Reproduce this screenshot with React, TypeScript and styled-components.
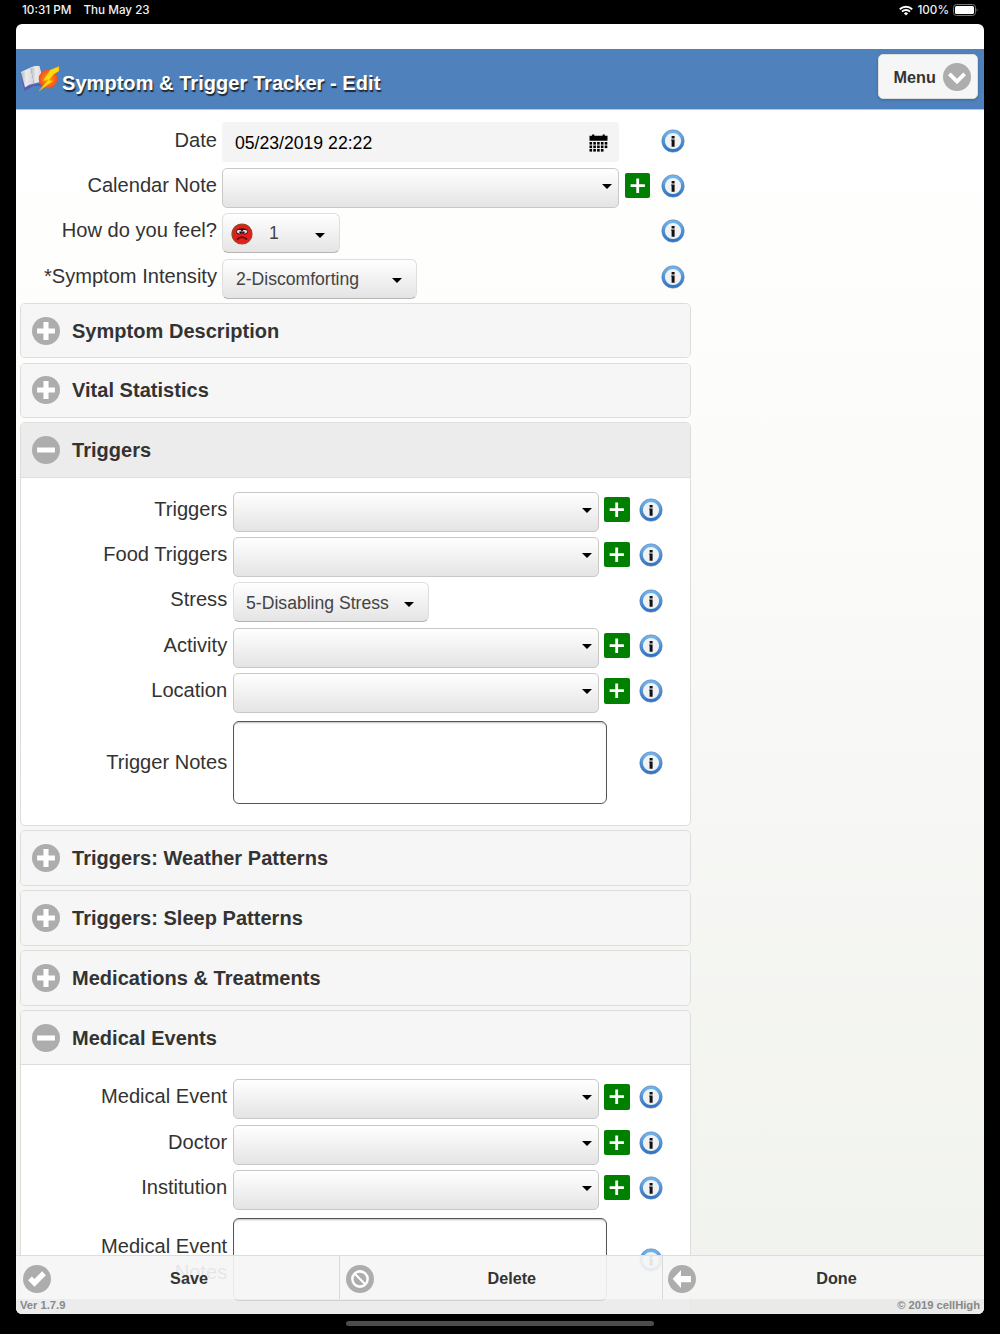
import type { FunctionComponent, ReactNode } from "react";
import styled, { createGlobalStyle } from "styled-components";

const GlobalStyle = createGlobalStyle`
  * {
    box-sizing: border-box;
  }
  body {
    margin: 0;
    background: #000;
    color: #333;
    font-family: "Liberation Sans", Arial, sans-serif;
  }
`;

const Device = styled.div`
  position: relative;
  display: flex;
  flex-direction: column;
  align-items: center;
  width: 1000px;
  height: 1334px;
  overflow: hidden;
  background: #000;
`;

const StatusBar = styled.div`
  display: flex;
  align-items: center;
  width: 100%;
  height: 24px;
  padding: 0 22px 4px 22px;
  color: #f2f2f2;
  font: 500 11.7px/20px Inter, sans-serif;
`;

const StatusDate = styled.span`
  flex: 1;
  margin-left: 12px;
`;

const Icon = styled.svg`
  display: block;
  flex: none;
`;

const StatusPercent = styled.span`
  margin: 0 4px;
`;

const Screen = styled.div`
  position: relative;
  width: 968px;
  height: 1290px;
  padding-top: 25px;
  overflow: hidden;
  border-radius: 6px;
  background: #fff;
`;

const Header = styled.header`
  display: flex;
  align-items: center;
  height: 60.5px;
  padding: 0 6.5px 0 4px;
  border-bottom: 1px solid #b9c6d6;
  background: #4f81bd;
`;

const Title = styled.h1`
  flex: 1;
  margin: 8px 0 0 1px;
  color: #fff;
  font-size: 20px;
  letter-spacing: 0.05px;
  line-height: 26px;
  text-shadow: 1px 2px 1px #1c2733;
`;

const MenuButton = styled.button`
  display: flex;
  align-items: center;
  justify-content: space-between;
  width: 100px;
  height: 45px;
  margin-bottom: 4px;
  padding: 1px 6px 0 15px;
  border: 1px solid #ddd;
  border-radius: 5px;
  background: #f6f6f6;
  box-shadow: 0 1px 3px rgba(0, 0, 0, 0.2);
  color: #333;
  font: bold 16.2px "Liberation Sans", sans-serif;
`;

const Content = styled.main`
  height: 1204.5px;
  padding: 10.3px 4px 0;
  overflow: hidden;
  background: linear-gradient(#fff, #fefefd 12%, #f0f2ed);
`;

const Form = styled.div`
  width: 671px;
`;

const Row = styled.div<{ $nested?: boolean; $tall?: boolean }>`
  display: grid;
  grid-template-columns: ${({ $nested }) =>
    $nested ? "206.2px 366.5px 28.7px 24px" : "197px 397px 30.7px 24px"};
  column-gap: 5.4px;
  align-items: center;
  height: ${({ $tall }) => ($tall ? 93 : 45.35)}px;
`;

const Label = styled.label<{ $tall?: boolean }>`
  padding: ${({ $tall }) => ($tall ? "1px 0 0" : "0 0 4.4px")};
  font-size: 20.1px;
  line-height: 25.5px;
  text-align: right;
  white-space: nowrap;
`;

const DateInput = styled.div`
  display: flex;
  align-items: center;
  justify-content: space-between;
  height: 40px;
  padding: 1.5px 11px 0 12.5px;
  border-radius: 4px;
  background: #f4f4f4;
  color: #000;
  font-size: 17.65px;
`;

const Select = styled.div<{ $width?: number }>`
  display: flex;
  align-items: center;
  justify-content: space-between;
  width: ${({ $width }) => ($width ? `${$width}px` : "100%")};
  height: 40px;
  padding: ${({ $width }) => ($width ? "1.5px 14px 0 12.5px" : "0 6px 0 12.5px")};
  border: 1px solid ${({ $width }) => ($width ? "#dedede" : "#c8c8c8")};
  border-bottom-color: ${({ $width }) => ($width ? "#b5b5b5" : "#c8c8c8")};
  border-radius: ${({ $width }) => ($width ? 6 : 5)}px;
  background: linear-gradient(#fff, #e4e4e4);
  color: #444;
  font-size: 17.6px;
`;

const Caret = styled.i<{ $low?: boolean }>`
  margin: ${({ $low }) => ($low ? "3px 0 0 auto" : "0 0 3px auto")};
  border: 5px solid transparent;
  border-top-color: #000;
  border-bottom-width: 0;
`;

const Mood = styled.span`
  display: flex;
  align-items: center;
  gap: 16px;
  margin-left: -5px;
`;

const TextArea = styled.div`
  width: 374.5px;
  height: 83px;
  border: 1px solid #555;
  border-radius: 6px;
  background: #fff;
  box-shadow: inset 0 2px 2px -1px rgba(0, 0, 0, 0.25);
`;

const AddButton = styled.span`
  width: 25.5px;
  height: 25.5px;
  margin-bottom: 4.6px;
  border-radius: 2px;
  background: #008000;
`;

const InfoButton = styled.span<{ $tall?: boolean }>`
  grid-column: 4;
  height: 24px;
  margin-bottom: ${({ $tall }) => ($tall ? -1 : 3.5)}px;
`;

const Panel = styled.section`
  margin-bottom: 4.33px;
  overflow: hidden;
  border: 1px solid #ddd;
  border-radius: 5px;
  background: #fff;
`;

const PanelHeader = styled.h2<{ $active?: boolean }>`
  display: flex;
  align-items: center;
  gap: 12px;
  height: 53.5px;
  margin: 0;
  padding: 0 0 0 11px;
  background: ${({ $active }) => ($active ? "#ececec" : "#f6f6f6")};
  font-size: 20px;
  letter-spacing: 0.03px;
  line-height: 24px;
`;

const PanelBody = styled.div`
  padding: 11.1px 0 16.4px;
  border-top: 1px solid #ddd;
`;

const Panels = styled.div`
  padding-top: 1.6px;
`;

const Footer = styled.footer`
  position: absolute;
  right: 0;
  bottom: 0;
  left: 0;
  height: 59px;
  border-top: 1px solid #ddd;
  background: rgba(232, 232, 232, 0.84);
`;

const Actions = styled.nav`
  display: grid;
  grid-template-columns: 324px 322.5px 1fr;
  height: 43px;
  background: rgba(255, 255, 255, 0.52);
`;

const Action = styled.div`
  display: flex;
  align-items: center;
  padding: 2px 11.5px 0 6.5px;
  border-right: 1px solid #d8d8d8;
  color: #333;
  font-size: 16.2px;
  font-weight: bold;

  &:not(:first-child) {
    padding-left: 5.5px;
  }

  &:last-child {
    padding-right: 7px;
    border-right: 0;
  }
`;

const ActionText = styled.span`
  flex: 1;
  text-align: center;
`;

const Credits = styled.div`
  display: flex;
  justify-content: space-between;
  padding: 0 4px;
  color: #888;
  font-size: 11.2px;
  font-weight: bold;
  line-height: 13px;
`;

const HomeBar = styled.div`
  width: 308px;
  height: 5px;
  margin-top: 7px;
  border-radius: 3px;
  background: #4c4c4c;
`;

const discPaths = {
  plus: "M5 0h4v5h5v4H9v5H5V9H0V5h5z",
  minus: "M0 5h14v4H0z",
  carat: "M11.95 3.4 7 8.35 2.05 3.4-.07 5.53 7 12.6l7.07-7.07z",
  check: "m14 4-3-3-6 6-2-2-3 3 5 5z",
  forbidden:
    "M7 0a7 7 0 1 0 0 14A7 7 0 0 0 7 0m0 2c2.8 0 5 2.2 5 5 0 1.1-.3 2.1-.9 2.900l-7-7C4.9 2.3 5.9 2 7 2m0 10c-2.800 0-5-2.200-5-5 0-1.100.3-2.100.9-2.900l7 7c-.8.6-1.800.9-2.900.9",
  arrow: "M6.2 0v4.7H14v4.8H6.2V14L-.3 7z",
};

interface DiscIconProps {
  name: keyof typeof discPaths;
}

const DiscIcon: FunctionComponent<DiscIconProps> = ({ name }) => (
  <Icon width="28" height="28" viewBox="-4 -4 22 22">
    <circle cx="7" cy="7" r="11" fill="#adadad" />
    <path d={discPaths[name]} fill="#fff" />
  </Icon>
);

const TrackerLogo = () => (
  <Icon width="41" height="28" viewBox="0 0 41 28">
    <defs>
      <radialGradient id="burst">
        <stop offset="0" stopColor="#ff9c18" />
        <stop offset="1" stopColor="#f4501c" />
      </radialGradient>
      <linearGradient id="page">
        <stop offset="0" stopColor="#b4b4ba" />
        <stop offset=".4" stopColor="#ececee" />
        <stop offset="1" stopColor="#d2d2d6" />
      </linearGradient>
    </defs>
    <path d="m.5 8 4 18 9-5h10l-.5-3-18 3z" fill="#5c58b4" />
    <path d="M1 7.5 10.5 3 14 18.5q-5 .5-9 4z" fill="url(#page)" />
    <path d="M10.5 3Q15 .5 19.5 1.5L24 17q-6-.5-10 1.5z" fill="url(#page)" />
    <path
      d="M1 7.5 10.5 3Q15 .5 19.5 1.5"
      fill="none"
      stroke="#f6f6f8"
      strokeWidth=".8"
    />
    <circle cx="28" cy="14" r="9.3" fill="url(#burst)" />
    <path
      d="M39 1.5 30 5l-7 11 5-1-9 11 14-10-4-1 5-6 5-3z"
      fill="#ffdc10"
      stroke="#f0a000"
      strokeWidth=".6"
    />
  </Icon>
);

const SadFace = () => (
  <Icon width="22" height="22" viewBox="0 0 22 22">
    <circle cx="11" cy="11" r="10" fill="#e81c1c" stroke="#8a4a20" strokeWidth="1.2" />
    <ellipse cx="8.2" cy="8.6" rx="2.8" ry="2.4" fill="#ddd" stroke="#301010" />
    <ellipse cx="13.8" cy="8.6" rx="2.8" ry="2.4" fill="#ddd" stroke="#301010" />
    <path d="M6 6.9q5-3.4 10 0z" fill="#301010" />
    <path d="M8.4 9.2H10M12 9.2h1.6" stroke="#111" strokeWidth="1.6" />
    <path d="M6 16.5q5-4.6 10 0" fill="none" stroke="#501010" strokeWidth="1.7" />
  </Icon>
);

const CalendarIcon = () => (
  <Icon width="19" height="19" viewBox="0 0 19 19">
    <path d="M.5 1.8h2.6V.4h2.2v1.4h8.3V.4h2.2v1.4h2.7v5H.5z" />
    {[8, 11.5, 15].map((y) =>
      [0.5, 4.3, 8.1, 11.9, 15.7].map((x) =>
        y === 15 && x === 15.7 ? null : (
          <rect key={`${x}-${y}`} x={x} y={y} width="2.6" height="2.6" />
        )
      )
    )}
  </Icon>
);

const InfoIcon = () => (
  <Icon width="24" height="24" viewBox="0 0 24 24">
    <defs>
      <linearGradient id="ring" x2="0" y2="1">
        <stop offset="0" stopColor="#6db5ee" />
        <stop offset="1" stopColor="#2f75c4" />
      </linearGradient>
    </defs>
    <circle cx="12" cy="12" r="9.6" fill="#f0f1f3" stroke="url(#ring)" strokeWidth="3" />
    <circle cx="12" cy="12" r="11.2" fill="none" stroke="#4a6fa5" strokeWidth=".6" />
    <path d="M10.6 7h3v2.4h-3zM10.2 10.5h3.4v7.2h-3v-6h-.4z" fill="#111" />
  </Icon>
);

const AddIcon = () => (
  <Icon width="25.5" height="25.5" viewBox="0 0 25.5 25.5">
    <path d="M12.7 5.6v14.3M5.6 12.7h14.3" stroke="#fff" strokeWidth="2.8" />
  </Icon>
);

interface FieldProps {
  label: string;
  nested?: boolean;
  tall?: boolean;
  add?: boolean;
  children?: ReactNode;
}

const Field: FunctionComponent<FieldProps> = ({
  label,
  nested,
  tall,
  add,
  children,
}) => (
  <Row $nested={nested} $tall={tall}>
    <Label $tall={tall}>
      {label.split("\n").map((line) => (
        <div key={line}>{line}</div>
      ))}
    </Label>
    {children ?? (
      <Select>
        <Caret />
      </Select>
    )}
    {add && (
      <AddButton>
        <AddIcon />
      </AddButton>
    )}
    <InfoButton $tall={tall}>
      <InfoIcon />
    </InfoButton>
  </Row>
);

interface CollapsibleProps {
  title: string;
  active?: boolean;
  children?: ReactNode;
}

const Collapsible: FunctionComponent<CollapsibleProps> = ({
  title,
  active,
  children,
}) => (
  <Panel>
    <PanelHeader $active={active}>
      <DiscIcon name={children ? "minus" : "plus"} />
      {title}
    </PanelHeader>
    {children && <PanelBody>{children}</PanelBody>}
  </Panel>
);

const App: FunctionComponent = () => {
  return (
    <Device>
      <GlobalStyle />
      <StatusBar>
        <span>10:31 PM</span>
        <StatusDate>Thu May 23</StatusDate>
        <Icon width="14" height="11" viewBox="0 0 14 11">
          <g fill="none" stroke="#fff" strokeWidth="1.9">
            <path d="M.8 4.2a9 9 0 0 1 12.4 0M3 6.6a5.8 5.8 0 0 1 8 0" />
          </g>
          <path d="M4.9 8.4a3 3 0 0 1 4.2 0L7 10.6z" fill="#fff" />
        </Icon>
        <StatusPercent>100%</StatusPercent>
        <Icon width="25" height="12" viewBox="0 0 25 12">
          <rect x=".5" y=".5" width="22" height="11" rx="3" fill="none" stroke="#777" />
          <rect x="2" y="2" width="19" height="8" rx="1.6" fill="#fff" />
          <path d="M23.7 4.3q1.5 1.7 0 3.4z" fill="#888" />
        </Icon>
      </StatusBar>
      <Screen>
        <Header>
          <TrackerLogo />
          <Title>Symptom &amp; Trigger Tracker - Edit</Title>
          <MenuButton>
            Menu
            <DiscIcon name="carat" />
          </MenuButton>
        </Header>
        <Content>
          <Form>
            <Field label="Date">
              <DateInput>
                05/23/2019 22:22
                <CalendarIcon />
              </DateInput>
            </Field>
            <Field label="Calendar Note" add />
            <Field label="How do you feel?">
              <Select $width={118}>
                <Mood>
                  <SadFace />1
                </Mood>
                <Caret $low />
              </Select>
            </Field>
            <Field label="*Symptom Intensity">
              <Select $width={195}>
                2-Discomforting
                <Caret $low />
              </Select>
            </Field>
            <Panels>
              <Collapsible title="Symptom Description" />
              <Collapsible title="Vital Statistics" />
              <Collapsible title="Triggers" active>
                <Field nested label="Triggers" add />
                <Field nested label="Food Triggers" add />
                <Field nested label="Stress">
                  <Select $width={196}>
                    5-Disabling Stress
                    <Caret $low />
                  </Select>
                </Field>
                <Field nested label="Activity" add />
                <Field nested label="Location" add />
                <Field nested tall label="Trigger Notes">
                  <TextArea />
                </Field>
              </Collapsible>
              <Collapsible title="Triggers: Weather Patterns" />
              <Collapsible title="Triggers: Sleep Patterns" />
              <Collapsible title="Medications & Treatments" />
              <Collapsible title="Medical Events">
                <Field nested label="Medical Event" add />
                <Field nested label="Doctor" add />
                <Field nested label="Institution" add />
                <Field nested tall label={"Medical Event\nNotes"}>
                  <TextArea />
                </Field>
              </Collapsible>
            </Panels>
          </Form>
        </Content>
        <Footer>
          <Actions>
            <Action>
              <DiscIcon name="check" />
              <ActionText>Save</ActionText>
            </Action>
            <Action>
              <DiscIcon name="forbidden" />
              <ActionText>Delete</ActionText>
            </Action>
            <Action>
              <DiscIcon name="arrow" />
              <ActionText>Done</ActionText>
            </Action>
          </Actions>
          <Credits>
            <span>Ver 1.7.9</span>
            <span>© 2019 cellHigh</span>
          </Credits>
        </Footer>
      </Screen>
      <HomeBar />
    </Device>
  );
};

export default App;
